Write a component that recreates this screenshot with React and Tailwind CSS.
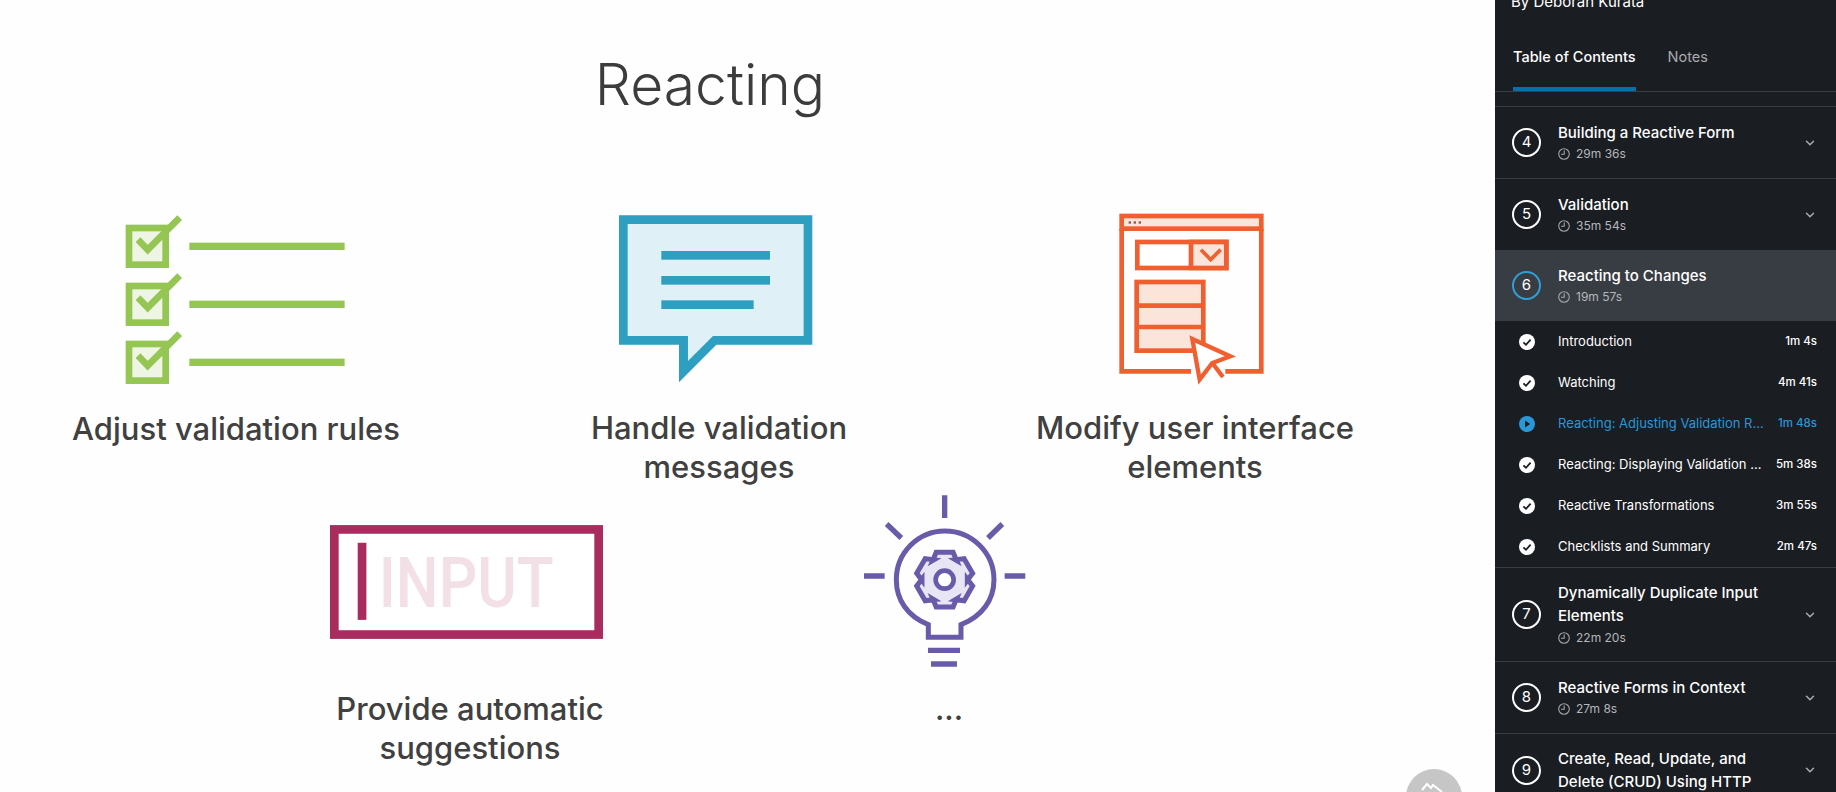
import React from "react";
import { ChevronDown } from "lucide-react";

const Clock = () => (
  <svg width="12" height="12" viewBox="0 0 12 12" fill="none" stroke="#a3a6aa" strokeWidth="1.1" className="shrink-0">
    <circle cx="6" cy="6" r="5.3" />
    <path d="M6.2 2.6V6.2H3" />
  </svg>
);

const Section = ({ n, title, time, active, chevron = true }) => (
  <div className={"flex items-center pl-[17px] pr-[19px] " + (active ? "bg-[#383c43] h-[71px]" : "border-t border-[#3a3d42] py-[13px] min-h-[72px]")}>
    <div className={"w-[29px] h-[29px] rounded-full border-2 flex items-center justify-center text-[15px] text-white shrink-0 " + (active ? "border-[#2f9fd8]" : "border-white")}>{n}</div>
    <div className="ml-[17px] flex-1 min-w-0">
      <div className="text-[15px] leading-[23px] font-medium text-white">{title}</div>
      {time && (
        <div className="flex items-center gap-[6px] h-[21px] text-[12px] text-[#b4b7bb]">
          <Clock />
          <span>{time}</span>
        </div>
      )}
    </div>
    {chevron && <ChevronDown size={14} strokeWidth={2.6} color="#a9abae" className="ml-2 shrink-0" />}
  </div>
);

const Row = ({ title, time, active }) => (
  <div className={"h-[41px] flex items-center pl-[24px] pr-[19px] text-[13px] " + (active ? "text-[#2a97d6]" : "text-white")}>
    <svg width="16" height="16" viewBox="0 0 16 16" className="shrink-0">
      <circle cx="8" cy="8" r="8" fill={active ? "#2a97d6" : "#ffffff"} />
      {active ? (
        <path d="M6 4.6 11.2 8 6 11.4Z" fill="#1a1d22" />
      ) : (
        <path d="M4.4 8.3 7 10.8 11.6 5.6" fill="none" stroke="#1a1d22" strokeWidth="1.8" />
      )}
    </svg>
    <div className="ml-[23px] w-[207px] truncate">{title}</div>
    <div className="ml-auto text-[11.5px] font-medium whitespace-nowrap">{time}</div>
  </div>
);

const Checklist = () => (
  <svg width="223.3" height="173.3" viewBox="45 40 670 520">
    {[0, 174, 348].map((o) => (
      <g key={o} transform={`translate(0 ${o})`}>
        <rect x="60" y="85" width="110" height="110" fill="#eef5e4" stroke="#95c653" strokeWidth="20" />
        <path d="M87 120 116 150 212 54" fill="none" stroke="#95c653" strokeWidth="20" />
        <rect x="241" y="129" width="466" height="22" fill="#95c653" />
      </g>
    ))}
  </svg>
);

const Bubble = () => (
  <svg width="193.3" height="170" viewBox="55 40 580 510">
    <path d="M55 47H635V435H347L235 548V435H55Z" fill="#2e9fc0" />
    <path d="M81 73H609V409H337L262 484V409H81Z" fill="#dff0f6" />
    <rect x="182" y="154" width="326" height="26" fill="#2e9fc0" />
    <rect x="182" y="229" width="326" height="26" fill="#2e9fc0" />
    <rect x="182" y="302" width="277" height="26" fill="#2e9fc0" />
  </svg>
);

const Form = () => (
  <svg width="148.3" height="173.3" viewBox="50 40 445 520">
    <g fill="none" stroke="#ef5f30" strokeWidth="14">
      <rect x="64" y="49" width="419" height="38" fill="#fbe4da" />
      <path d="M272 515H64V87M483 87V515H375" />
      <rect x="111" y="127" width="267" height="78" fill="#ffffff" />
      <rect x="272" y="127" width="106" height="78" fill="#fbe4da" />
      <path d="M302 150 331 180 361 150" strokeWidth="11" />
      <rect x="109" y="247" width="200" height="206" fill="#fbe4da" />
      <path d="M109 318H309M109 382H309" />
      <path d="M276 418 390 470 336 490 298 540Z" fill="#ffffff" strokeLinejoin="miter" strokeWidth="13" />
      <path d="M336 490 368 532" strokeWidth="13" />
    </g>
    <g fill="#8f5a48">
      <rect x="85" y="65" width="7" height="7" />
      <rect x="100" y="65" width="7" height="7" />
      <rect x="115" y="65" width="7" height="7" />
    </g>
  </svg>
);

const InputIcon = () => (
  <svg width="273" height="114" viewBox="30 44 818 341">
    <rect x="43" y="57" width="792" height="315" fill="#ffffff" stroke="#a82d5e" strokeWidth="26" />
    <rect x="113" y="97" width="26" height="231" fill="#a82d5e" />
    <text x="176" y="290" fontFamily="Roboto, sans-serif" fontWeight="500" fontSize="212" fill="#f3e0e6" textLength="524" lengthAdjust="spacingAndGlyphs">INPUT</text>
  </svg>
);

const gearPoints = () => {
  const pts = [];
  const cx = 287, cy = 285;
  for (let i = 0; i < 6; i++) {
    const a = (i * 60 - 90) * (Math.PI / 180);
    const w = 0.3, m = 0.55;
    [[-m, 68], [-w, 86], [w, 86], [m, 68]].forEach(([d, r]) => {
      pts.push(`${(cx + r * Math.cos(a + d)).toFixed(1)},${(cy + r * Math.sin(a + d)).toFixed(1)}`);
    });
  }
  return pts.join(" ");
};

const Bulb = () => (
  <svg width="163.3" height="175" viewBox="45 25 490 525">
    <g fill="none" stroke="#6a5aaa" strokeWidth="16">
      <path d="M287 32V100M45 274H107M467 274H529M113 118 157 160M460 118 417 160" />
      <path d="M238 420C175 395 142 345 142 285 142 205 207 139 288 139 369 139 435 205 435 285 435 345 400 395 336 420V458H238Z" strokeWidth="15" />
      <path d="M237 497H333M246 538H324" />
      <polygon points={gearPoints()} fill="#e8e6f4" strokeWidth="15" />
      <circle cx="287" cy="285" r="27" fill="#ffffff" strokeWidth="14" />
    </g>
  </svg>
);

const Label = ({ children }) => (
  <div className="text-center text-[#404040] text-[31px] leading-[39px] font-medium font-['Inter',sans-serif] whitespace-nowrap">{children}</div>
);

export default function App() {
  return (
    <div className="relative flex w-[1836px] h-[792px] overflow-hidden bg-white font-['Inter',sans-serif]">
      <main className="w-[1495px] shrink-0 bg-[#fefefe]">
        <div className="h-[213px]">
          <h1 className="w-[1420px] pt-[47px] text-center text-[57px] leading-[76px] font-light text-[#3c3c3c]">Reacting</h1>
        </div>
        <div className="flex h-[273px]">
          <div className="w-[472px] flex flex-col items-center">
            <div className="h-[195.5px]"><Checklist /></div>
            <Label>Adjust validation rules</Label>
          </div>
          <div className="w-[472px] ml-[11px] flex flex-col items-center">
            <div className="h-[195.5px] mr-[6px]"><Bubble /></div>
            <Label>Handle validation<br />messages</Label>
          </div>
          <div className="w-[472px] ml-[4px] flex flex-col items-center">
            <div className="h-[195.5px] mr-[8px]"><Form /></div>
            <Label>Modify user interface<br />elements</Label>
          </div>
        </div>
        <div className="flex ml-[234px] gap-[7px]">
          <div className="w-[472px] flex flex-col items-center">
            <div className="h-[202.5px] pt-[39px] mr-[7px]"><InputIcon /></div>
            <Label>Provide automatic<br />suggestions</Label>
          </div>
          <div className="w-[472px] flex flex-col items-center">
            <div className="h-[202.5px] pt-[7px] mr-[7px]"><Bulb /></div>
            <Label>...</Label>
          </div>
        </div>
      </main>

      <aside className="flex-1 bg-[#1a1d22] overflow-hidden">
        <div className="h-[23px] overflow-hidden pl-[16px]">
          <div className="-mt-[8px] text-[15px] leading-[20px] text-white">By Deborah Kurata</div>
        </div>
        <div className="h-[69px] border-b border-[#3a3d42] flex pl-[18px] gap-[32px] text-[14.5px]">
          <div className="h-[68px] border-b-4 border-[#0a6ea8] pt-[23px] leading-[22px] font-medium text-white">Table of Contents</div>
          <div className="pt-[23px] leading-[22px] text-[#a9abae]">Notes</div>
        </div>
        <div className="h-[14px]" />
        <Section n="4" title="Building a Reactive Form" time="29m 36s" />
        <Section n="5" title="Validation" time="35m 54s" />
        <Section n="6" title="Reacting to Changes" time="19m 57s" active chevron={false} />
        <Row title="Introduction" time="1m 4s" />
        <Row title="Watching" time="4m 41s" />
        <Row title="Reacting: Adjusting Validation Rules" time="1m 48s" active />
        <Row title="Reacting: Displaying Validation Messages" time="5m 38s" />
        <Row title="Reactive Transformations" time="3m 55s" />
        <Row title="Checklists and Summary" time="2m 47s" />
        <Section n="7" title={<>Dynamically Duplicate Input<br />Elements</>} time="22m 20s" />
        <Section n="8" title="Reactive Forms in Context" time="27m 8s" />
        <Section n="9" title={<>Create, Read, Update, and<br />Delete (CRUD) Using HTTP</>} />
      </aside>

      <div className="absolute left-[1406px] top-[769px] w-[56px] h-[56px] rounded-full bg-[#c6c6c6]">
        <svg width="56" height="56" viewBox="0 0 56 56" fill="none" stroke="#ffffff" strokeWidth="2">
          <path d="M16 21 21 15 25 19 27 16 36 23" />
        </svg>
      </div>
    </div>
  );
}
